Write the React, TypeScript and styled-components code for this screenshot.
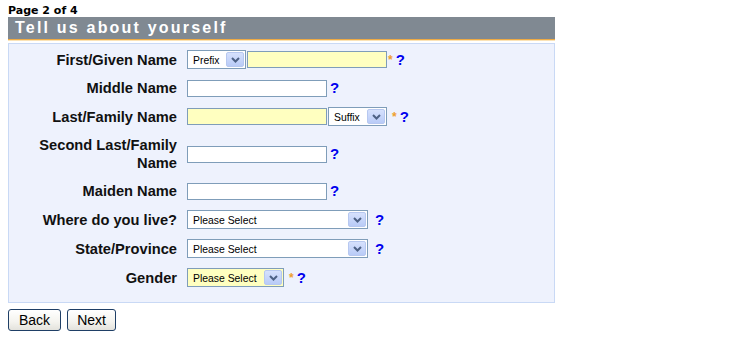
import React from "react";
import styled, { createGlobalStyle } from "styled-components";

const GlobalStyle = createGlobalStyle`
  html, body { margin: 0; padding: 0; background: #ffffff; }
  body { font-family: "Liberation Sans", Arial, sans-serif; }
  * { box-sizing: border-box; }
`;

const Page = styled.div`
  padding: 4px 8px 0 8px;
  width: 563px;
`;

const PageNote = styled.div`
  font-family: "DejaVu Sans", Verdana, sans-serif;
  font-weight: bold;
  font-size: 11px;
  line-height: 13px;
  height: 13px;
  color: #000;
`;

const SectionTitle = styled.h2`
  margin: 0 0 3px 0;
  height: 23px;
  padding-left: 7px;
  background: #808992;
  border-bottom: 1px solid #eeaa44;
  box-shadow: 0 1px 0 #fae3b8;
  color: #ffffff;
  font-family: "Liberation Sans", Arial, sans-serif;
  font-weight: bold;
  font-size: 16px;
  line-height: 22px;
  letter-spacing: 2.2px;
`;

const Panel = styled.div`
  border: 1px solid #c9d9f5;
  background: #eef2fd;
  padding: 6px 0 15px 0;
`;

const FormGrid = styled.div`
  display: grid;
  grid-template-columns: 168px 1fr;
  column-gap: 10px;
  row-gap: 10px;
  align-items: center;
`;

const Label = styled.div`
  text-align: right;
  font-family: "Liberation Sans", Arial, sans-serif;
  font-weight: bold;
  font-size: 14.67px;
  line-height: 18px;
  color: #111;
  padding-left: 20px;
`;

const Field = styled.div`
  display: flex;
  align-items: center;
`;

const TextInput = styled.input<{ $w: number; $required?: boolean; $mr?: number }>`
  width: ${(p) => p.$w}px;
  height: 17px;
  margin: 0 ${(p) => p.$mr ?? 0}px 0 0;
  padding: 0 3px;
  border: 1px solid #7f9db9;
  background: ${(p) => (p.$required ? "#ffffc0" : "#ffffff")};
  font-family: "Liberation Sans", Arial, sans-serif;
  font-size: 11px;
  outline: none;
`;

const SelectBox = styled.div<{ $w: number; $required?: boolean; $mr?: number }>`
  display: flex;
  align-items: center;
  width: ${(p) => p.$w}px;
  height: 19px;
  margin-right: ${(p) => p.$mr ?? 0}px;
  border: 1px solid #7f9db9;
  background: ${(p) => (p.$required ? "#ffffc0" : "#ffffff")};
`;

const SelectText = styled.span`
  flex: 1;
  padding-left: 5px;
  font-family: "Liberation Sans", Arial, sans-serif;
  font-size: 10.4px;
  line-height: 17px;
  padding-top: 1px;
  color: #000;
  white-space: nowrap;
  overflow: hidden;
`;

const ArrowButton = styled.span`
  display: flex;
  align-items: center;
  justify-content: center;
  width: 18px;
  height: 15px;
  margin-right: 1px;
  border: 1px solid #b7c8f0;
  border-radius: 2px;
  background: linear-gradient(#d6e1fd, #b9cbf7);
`;

const Required = styled.span`
  font-family: "Liberation Sans", Arial, sans-serif;
  font-weight: bold;
  font-size: 12px;
  line-height: 12px;
  color: #eea030;
  margin-left: 1px;
`;

const Help = styled.span`
  margin-left: 3px;
  font-family: "Liberation Sans", Arial, sans-serif;
  font-weight: bold;
  font-size: 15px;
  line-height: 18px;
  color: #0000ee;
  cursor: pointer;
`;

const Actions = styled.div`
  display: flex;
  gap: 6px;
  margin-top: 6px;
`;

const Button = styled.button<{ $px: number }>`
  height: 22px;
  padding: 0 ${(p) => p.$px}px;
  border: 1px solid #1f3f66;
  border-radius: 3px;
  background: linear-gradient(#ffffff 0%, #f4f3ee 60%, #e3e2dc 100%);
  font-family: "Liberation Sans", Arial, sans-serif;
  font-size: 14px;
  line-height: 20px;
  color: #000;
  cursor: pointer;
`;

const Chevron = () => (
  <svg width="9" height="6" viewBox="0 0 9 6" aria-hidden="true">
    <path d="M1 1 L4.5 4.5 L8 1" fill="none" stroke="#4d6185" strokeWidth="2" />
  </svg>
);

type SelectProps = { w: number; text: string; required?: boolean; mr?: number };

const FakeSelect = ({ w, text, required, mr }: SelectProps) => (
  <SelectBox $w={w} $required={required} $mr={mr} role="combobox">
    <SelectText>{text}</SelectText>
    <ArrowButton>
      <Chevron />
    </ArrowButton>
  </SelectBox>
);

export default function App() {
  return (
    <>
      <GlobalStyle />
      <Page>
        <PageNote>Page 2 of 4</PageNote>
        <SectionTitle>Tell us about yourself</SectionTitle>
        <Panel>
          <FormGrid>
            <Label>First/Given Name</Label>
            <Field>
              <FakeSelect w={59} text="Prefix" mr={1} />
              <TextInput $w={140} $required />
              <Required>*</Required>
              <Help>?</Help>
            </Field>

            <Label>Middle Name</Label>
            <Field>
              <TextInput $w={140} />
              <Help>?</Help>
            </Field>

            <Label>Last/Family Name</Label>
            <Field>
              <TextInput $w={140} $required $mr={1} />
              <FakeSelect w={59} text="Suffix" mr={4} />
              <Required>*</Required>
              <Help>?</Help>
            </Field>

            <Label>Second Last/Family Name</Label>
            <Field>
              <TextInput $w={140} />
              <Help>?</Help>
            </Field>

            <Label>Maiden Name</Label>
            <Field>
              <TextInput $w={140} />
              <Help>?</Help>
            </Field>

            <Label>Where do you live?</Label>
            <Field>
              <FakeSelect w={181} text="Please Select" mr={4} />
              <Help>?</Help>
            </Field>

            <Label>State/Province</Label>
            <Field>
              <FakeSelect w={181} text="Please Select" mr={4} />
              <Help>?</Help>
            </Field>

            <Label>Gender</Label>
            <Field>
              <FakeSelect w={97} text="Please Select" required mr={4} />
              <Required>*</Required>
              <Help>?</Help>
            </Field>
          </FormGrid>
        </Panel>
        <Actions>
          <Button $px={10}>Back</Button>
          <Button $px={9}>Next</Button>
        </Actions>
      </Page>
    </>
  );
}
